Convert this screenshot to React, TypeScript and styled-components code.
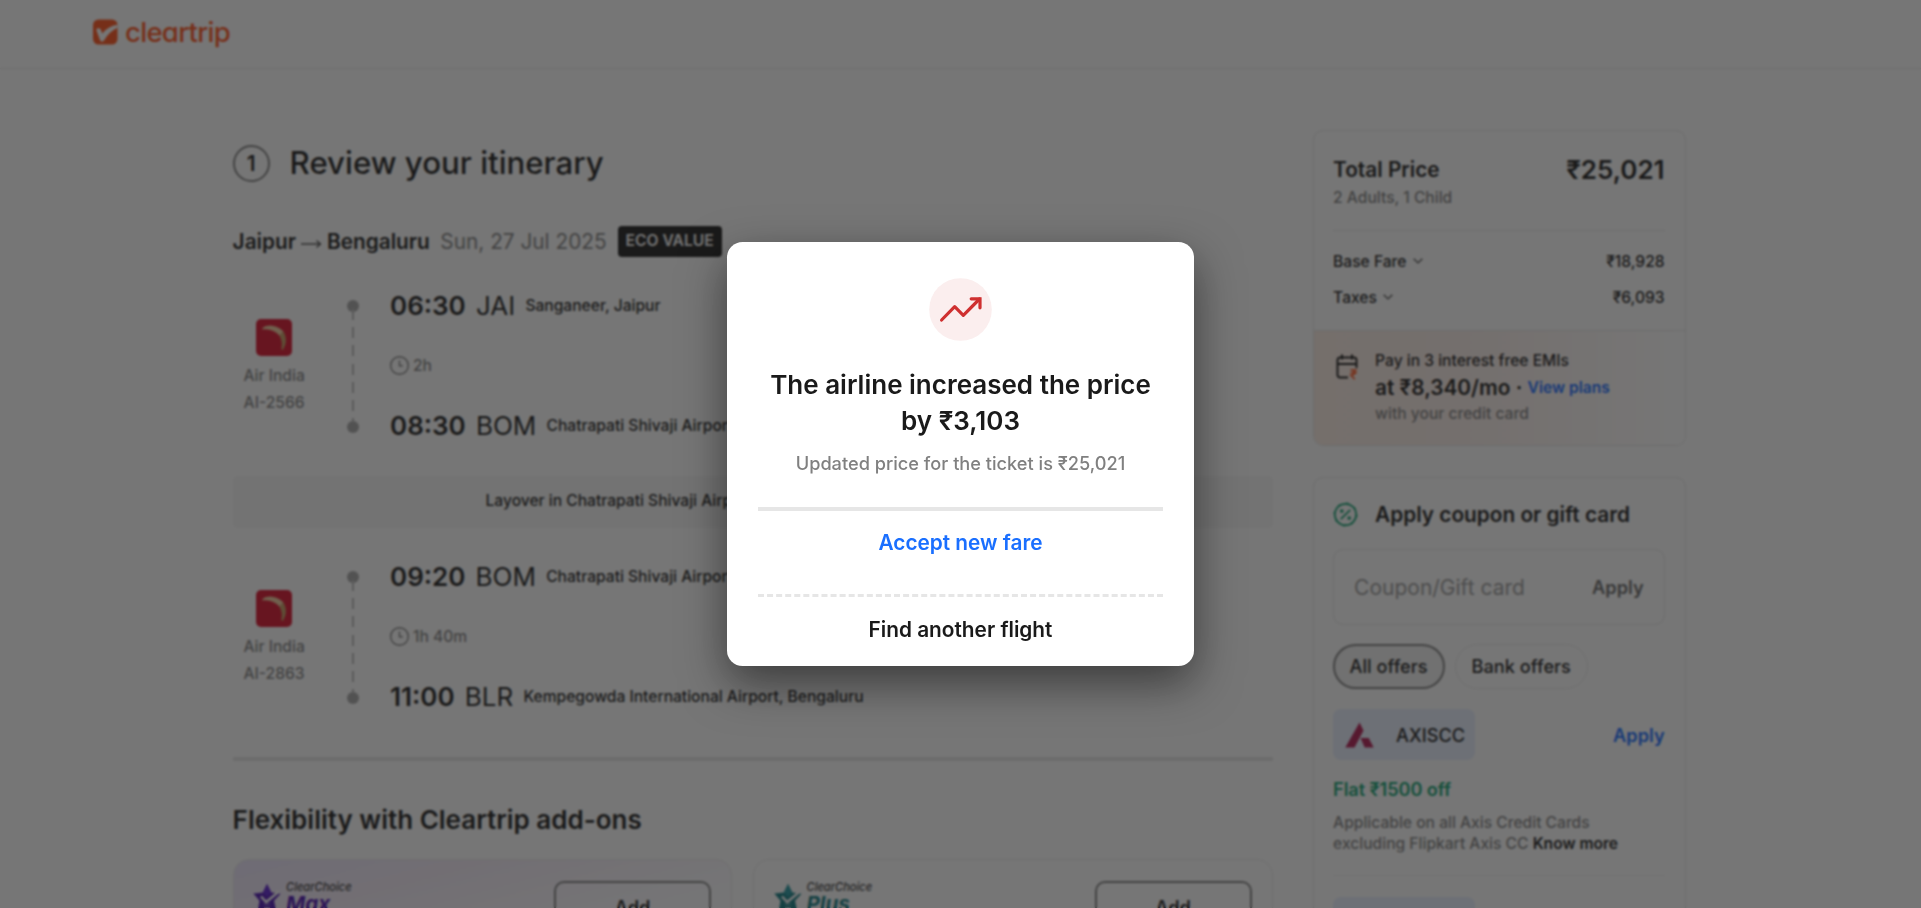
import React from "react";
import styled, { createGlobalStyle } from "styled-components";

const GlobalStyle = createGlobalStyle`
  * { box-sizing: border-box; }
  html, body { margin: 0; height: 100%; overflow: hidden; }
  body {
    background: #fff;
    color: #1a1a1a;
    font-family: Inter, "Liberation Sans", sans-serif;
    font-size: 15.6px;
    font-weight: 500;
  }
  h1, h2, h3, p { margin: 0; }
  button { font: inherit; color: inherit; background: none; border: 0; padding: 0; }
`;

const Page = styled.div`
  height: 908px;
  overflow: hidden;
`;

const Header = styled.header`
  height: 69px;
  padding: 19px 0 0 93px;
  border-bottom: 1px solid #ebebeb;
  display: flex;
  align-items: flex-start;
  gap: 7px;
  color: #ff4f17;
`;

const Wordmark = styled.span`
  font-size: 27.5px;
  line-height: 26px;
  font-weight: 550;
  letter-spacing: -0.7px;
  font-feature-settings: "cv11";
`;

const Columns = styled.main`
  display: flex;
  align-items: flex-start;
  gap: 40px;
  padding-left: 232.6px;
`;

const Itinerary = styled.section`
  width: 1040px;
  padding-top: 76px;
`;

const StepHeading = styled.h1`
  display: flex;
  align-items: center;
  gap: 20px;
  height: 37px;
  font-size: 31.2px;
  font-weight: 500;
  line-height: 37px;
`;

const StepTitle = styled.span`
  padding-bottom: 1px;
`;

const StepNumber = styled.span`
  width: 37px;
  height: 37px;
  border: 2px solid #808080;
  border-radius: 50%;
  font-size: 20.8px;
  font-weight: 600;
  line-height: 33px;
  text-align: center;
`;

const Route = styled.div`
  display: flex;
  align-items: center;
  height: 31px;
  margin-top: 44px;
  font-size: 20.8px;
  font-weight: 600;
`;

const RouteArrow = styled.svg`
  width: 21px;
  height: 10px;
  margin: 4px 5px 0 5px;
`;

const RouteDate = styled.span`
  margin: 0 11px 0 10.5px;
  font-weight: 400;
  color: #808080;
`;

const FareBadge = styled.span`
  width: 104px;
  height: 31px;
  border-radius: 4px;
  background: #1a1a1a;
  color: #fff;
  font-size: 15.6px;
  line-height: 29px;
  text-align: center;
`;

const FlightRow = styled.div`
  display: flex;
  height: 152px;
  margin-top: 33px;
`;

const Airline = styled.div`
  width: 83px;
  padding-top: 3px;
  display: flex;
  flex-direction: column;
  align-items: center;
  justify-content: center;
  line-height: 26.4px;
  color: #808080;
`;

const AirlineLogo = styled.svg`
  width: 36px;
  height: 37px;
  margin-bottom: 7px;
`;

const Timeline = styled.div`
  width: 12px;
  margin: 10px 31px 9px 31.4px;
  display: flex;
  flex-direction: column;
  align-items: center;
  justify-content: space-between;
`;

const Dot = styled.span`
  width: 12px;
  height: 12px;
  border-radius: 50%;
  background: #a6a6a6;
`;

const Track = styled.span`
  flex: 1;
  width: 2px;
  margin-top: -3px;
  background: repeating-linear-gradient(to bottom, #bbb 0 11px, transparent 11px 18.2px);
`;

const Legs = styled.div`
  display: flex;
  flex-direction: column;
  justify-content: space-between;
  padding-bottom: 1px;
`;

const Leg = styled.div`
  display: flex;
  align-items: center;
  gap: 10.2px;
  height: 31px;
  white-space: nowrap;
`;

const Time = styled.span`
  font-size: 26px;
  font-weight: 600;
`;

const Code = styled.span`
  font-size: 26px;
  font-weight: 400;
`;

const Duration = styled.div`
  display: flex;
  align-items: center;
  gap: 3px;
  color: #808080;
`;

const Layover = styled.div`
  height: 52px;
  margin-top: 34px;
  border-radius: 5px;
  background: #f7f7f7;
  line-height: 49px;
  text-align: center;
`;

const SectionRule = styled.hr`
  height: 4px;
  margin: 44px 0 0;
  border: 0;
  background: #e6e6e6;
`;

const SectionTitle = styled.h2`
  margin-top: 42px;
  font-size: 26px;
  line-height: 34px;
  font-weight: 600;
`;

const AddOns = styled.div`
  display: grid;
  grid-template-columns: 499.500px 519.500px;
  gap: 21px;
  margin-top: 22px;
`;

const AddOnCard = styled.article<{ $tinted?: boolean }>`
  display: flex;
  justify-content: space-between;
  align-items: flex-start;
  height: 240px;
  padding: 21px 20px 0;
  border: 1px solid #ebebeb;
  border-radius: 16px;
  background: ${(p) => (p.$tinted ? "linear-gradient(165deg, #ece6fd 0%, #f5ecf8 18%, #fdfcff 42%, #fff 60%)" : "#fff")};
`;

const AddOnBrand = styled.div`
  display: flex;
  gap: 5px;
  margin-left: -0.6px;

  svg { margin-top: 3px; }
`;

const AddOnName = styled.div<{ $color: string }>`
  font-size: 20.6px;
  line-height: 19px;
  font-weight: 700;
  font-style: italic;
  color: ${(p) => p.$color};

  small {
    display: block;
    color: #333;
    font-size: 11.1px;
    line-height: 13px;
    font-weight: 500;
  }
`;

const AddButton = styled.button`
  width: 157px;
  height: 52px;
  border: 2px solid #808080;
  border-radius: 10px;
  font-size: 18.2px;
  font-weight: 600;
`;

const Sidebar = styled.aside`
  width: 373px;
  padding-top: 61px;
`;

const Card = styled.section<{ $top?: number }>`
  margin-top: ${(p) => p.$top ?? 0}px;
  border: 1px solid #e6e6e6;
  border-radius: 10px;
  overflow: hidden;
`;

const CardBody = styled.div<{ $pad: string }>`
  padding: ${(p) => p.$pad};
`;

const Split = styled.div<{ $height: number }>`
  display: flex;
  align-items: center;
  justify-content: space-between;
  height: ${(p) => p.$height}px;
`;

const Strong = styled.span<{ $size?: number }>`
  font-size: ${(p) => p.$size ?? 20.8}px;
  font-weight: 600;
`;

const Travellers = styled.p`
  line-height: 28px;
  color: #808080;
`;

const Rule = styled.hr<{ $gap: string; $color?: string }>`
  height: 1px;
  margin: ${(p) => p.$gap};
  border: 0;
  background: ${(p) => p.$color ?? "#e6e6e6"};
`;

const FareLabel = styled.span`
  display: flex;
  align-items: center;
  gap: 6px;
`;

const EmiPanel = styled.div`
  display: flex;
  gap: 17px;
  height: 115px;
  padding: 17px 20px 0 22.5px;
  border-top: 1px solid #e6e6e6;
  background: linear-gradient(90deg, #fcede4 0%, #fbeee9 40%, #fff 98%);
  line-height: 25px;
`;

const EmiIcon = styled.svg`
  width: 22px;
  height: 26px;
  margin-top: 6px;
`;

const EmiPrice = styled.div`
  display: flex;
  align-items: center;
  gap: 5.3px;
  height: 29px;
`;

const Link = styled.button<{ $size: number }>`
  font-size: ${(p) => p.$size}px;
  font-weight: 600;
  color: #1268ff;
`;

const Muted = styled.p<{ $line?: number }>`
  line-height: ${(p) => p.$line ?? 24}px;
  color: #808080;

  b { font-weight: 600; color: #1a1a1a; }
`;

const CouponTitle = styled.h3`
  display: flex;
  align-items: center;
  gap: 17.5px;
  height: 28px;
  font-size: 20.8px;
  font-weight: 600;
`;

const CouponField = styled.div`
  display: flex;
  align-items: center;
  justify-content: space-between;
  height: 76px;
  margin-top: 21px;
  padding: 0 20px 0 20.5px;
  border: 1px solid #e6e6e6;
  border-radius: 10px;
  font-size: 21px;
  font-weight: 400;
  color: #999;
`;

const ApplyCoupon = styled.button`
  font-size: 18.2px;
  font-weight: 600;
  color: #666;
`;

const Chips = styled.div`
  display: flex;
  gap: 10px;
  margin-top: 19px;
`;

const Chip = styled.button<{ $active?: boolean }>`
  height: 45px;
  padding: 0 ${(p) => (p.$active ? 15 : 16)}px 2px;
  border: ${(p) => (p.$active ? "2px solid #808080" : "1px solid #ebebeb")};
  border-radius: 23px;
  background: ${(p) => (p.$active ? "#f2f2f2" : "#fff")};
  font-size: 18.2px;
`;

const OfferTag = styled.span`
  display: flex;
  align-items: center;
  gap: 22px;
  width: 141.5px;
  height: 51px;
  padding-left: 12px;
  border-radius: 8px;
  background: #e8f0ff;
  font-size: 18.2px;
`;

const OfferValue = styled.p`
  margin: 16px 0 10px;
  font-size: 18.2px;
  line-height: 26px;
  font-weight: 600;
  letter-spacing: -0.1px;
  color: #0e9f6e;
`;

const Overlay = styled.div`
  position: fixed;
  inset: 0;
  display: flex;
  align-items: flex-start;
  justify-content: center;
  padding-top: 242px;
  background: rgba(26, 26, 26, 0.6);
  backdrop-filter: blur(1.3px);
`;

const Dialog = styled.div`
  display: flex;
  flex-direction: column;
  align-items: center;
  width: 467px;
  height: 424px;
  padding: 36px 31px 0;
  border-radius: 15.6px;
  background: #fff;
  box-shadow: 0 17px 46px rgba(0, 0, 0, 0.5);
  text-align: center;
`;

const DialogIcon = styled.svg`
  width: 63px;
  height: 63px;
`;

const DialogTitle = styled.h2`
  margin-top: 26px;
  font-size: 26px;
  line-height: 36px;
  font-weight: 600;
`;

const DialogText = styled.p`
  margin: 11px 0 31px;
  font-size: 18.2px;
  line-height: 26px;
  color: #808080;
`;

const DialogAction = styled.button<{ $primary?: boolean }>`
  width: 405px;
  height: ${(p) => (p.$primary ? 87 : 72)}px;
  padding: ${(p) => (p.$primary ? "19px 0 38px" : "20px 0 23px")};
  border-top: ${(p) => (p.$primary ? "4px solid" : "3px dashed")} #e6e6e6;
  font-size: 20.8px;
  line-height: 26px;
  font-weight: 600;
  color: ${(p) => (p.$primary ? "#1a6fff" : "#1a1a1a")};
`;

function LogoMark() {
  return (
    <svg width="25" height="26" viewBox="0 0 25 26">
      <rect y=".5" width="24.5" height="25" rx="5.5" fill="#ff4f17" />
      <path d="M3.300 11c.3-2.200 3.600-2.400 4.500-.2l1.500 3.700C13 9.800 18 6.800 24.500 5.800v3C19 11.500 14.500 15.500 11 21.500c-1 1.600-3.200 1.500-3.900-.2z" fill="#fff" />
    </svg>
  );
}

function Clock() {
  return (
    <svg width="20" height="20" viewBox="0 0 20 20" fill="none" stroke="#808080" strokeWidth="1.4">
      <circle cx="9.500" cy="9.500" r="8.800" />
      <path d="M9.500 4.500v5.200h3.200" />
    </svg>
  );
}

function Chevron() {
  return (
    <svg width="10" height="6" viewBox="0 0 10 6" fill="none" stroke="#4d4d4d" strokeWidth="1.400">
      <path d="M.7.8 5 4.900 9.300.8" />
    </svg>
  );
}

function AirIndiaLogo() {
  return (
    <AirlineLogo viewBox="0 0 36 37">
      <rect width="36" height="37" rx="5" fill="#da0e29" />
      <path d="M6.500 9C13 4.500 21 6.500 27.300 12.300L24 17C19 11.500 13 9.500 6.500 10.500z" fill="#efc89a" />
      <path d="M27.300 12.300c3.500 6 3.700 12.500-.5 18.700-1.200-.2-1.500-1-1.300-2 .8-4.500.3-8.500-2-12z" fill="#c39a5e" />
    </AirlineLogo>
  );
}

function StarMark({ light, dark }: { light: string; dark: string }) {
  return (
    <svg width="28" height="29" viewBox="0 0 28 29">
      <path d="M14 0l4.300 8.500L27.500 9.800 21 16.800 23.500 28 14 23.500 4.500 28 6.500 16.800.3 9.500 9.800 8.500z" fill={dark} />
      <path d="M14 0l4.300 8.500-4.300 4.600-4.200-4.600z" fill={light} />
      <path d="M8 12.500l5.200 5.500L26 7.500" fill="none" stroke="#fff" strokeWidth="2.400" />
      <path d="M11 20h6M11 23.500h6" stroke="#fff" strokeWidth="1" opacity=".5" />
    </svg>
  );
}

function AxisMark() {
  return (
    <svg width="29" height="26" viewBox="0 0 29 26" fill="#b0184f">
      <path d="M14.500.5 18.500 8.500 9.500 25.500H.3z" />
      <path d="M15.500 16h8.200l5 9.500h-9z" />
    </svg>
  );
}

interface Stop { time: string; code: string; place: string }
interface FlightProps { number: string; duration: string; from: Stop; to: Stop }

function StopLine({ stop }: { stop: Stop }) {
  return (
    <Leg>
      <Time>{stop.time}</Time>
      <Code>{stop.code}</Code>
      <span>{stop.place}</span>
    </Leg>
  );
}

function Flight({ number, duration, from, to }: FlightProps) {
  return (
    <FlightRow>
      <Airline>
        <AirIndiaLogo />
        <span>Air India</span>
        <span>{number}</span>
      </Airline>
      <Timeline><Dot /><Track /><Dot /></Timeline>
      <Legs>
        <StopLine stop={from} />
        <Duration><Clock />{duration}</Duration>
        <StopLine stop={to} />
      </Legs>
    </FlightRow>
  );
}

function Fare({ label, amount }: { label: string; amount: string }) {
  return (
    <Split $height={36}>
      <FareLabel>{label}<Chevron /></FareLabel>
      <span>{amount}</span>
    </Split>
  );
}

function AddOn({ name, color, light, tinted }: { name: string; color: string; light: string; tinted?: boolean }) {
  return (
    <AddOnCard $tinted={tinted}>
      <AddOnBrand>
        <StarMark light={light} dark={color} />
        <AddOnName $color={color}><small>ClearChoice</small>{name}</AddOnName>
      </AddOnBrand>
      <AddButton>Add</AddButton>
    </AddOnCard>
  );
}

export default function App() {
  return (
    <>
      <GlobalStyle />
      <Page>
        <Header><LogoMark /><Wordmark>cleartrip</Wordmark></Header>
        <Columns>
          <Itinerary>
            <StepHeading><StepNumber>1</StepNumber><StepTitle>Review your itinerary</StepTitle></StepHeading>
            <Route>
              Jaipur
              <RouteArrow viewBox="0 0 21 10" fill="none" stroke="#4d4d4d" strokeWidth="1.400">
                <path d="M0 5h19M15.500 1.500 19.500 5l-4 3.500" />
              </RouteArrow>
              Bengaluru
              <RouteDate>Sun, 27 Jul 2025</RouteDate>
              <FareBadge>ECO VALUE</FareBadge>
            </Route>
            <Flight
              number="AI-2566"
              duration="2h"
              from={{ time: "06:30", code: "JAI", place: "Sanganeer, Jaipur" }}
              to={{ time: "08:30", code: "BOM", place: "Chatrapati Shivaji Airport, Mumbai" }}
            />
            <Layover>Layover in Chatrapati Shivaji Airport, Mumbai • 50m • Change of planes</Layover>
            <Flight
              number="AI-2863"
              duration="1h 40m"
              from={{ time: "09:20", code: "BOM", place: "Chatrapati Shivaji Airport, Mumbai" }}
              to={{ time: "11:00", code: "BLR", place: "Kempegowda International Airport, Bengaluru" }}
            />
            <SectionRule />
            <SectionTitle>Flexibility with Cleartrip add-ons</SectionTitle>
            <AddOns>
              <AddOn name="Max" color="#4a0fb0" light="#5b1fd0" tinted />
              <AddOn name="Plus" color="#0f7a80" light="#2396a0" />
            </AddOns>
          </Itinerary>

          <Sidebar>
            <Card>
              <CardBody $pad="24px 20px 15px 19.500px">
                <Split $height={29}><Strong>Total Price</Strong><Strong $size={26}>₹25,021</Strong></Split>
                <Travellers>2 Adults, 1 Child</Travellers>
                <Rule $gap="18px 0 12px" />
                <Fare label="Base Fare" amount="₹18,928" />
                <Fare label="Taxes" amount="₹6,093" />
              </CardBody>
              <EmiPanel>
                <EmiIcon viewBox="0 0 22 26" fill="none" stroke="#1a1a1a" strokeWidth="2">
                  <path d="M12 23.500H4a2.500 2.500 0 0 1-2.500-2.500V6A2.500 2.500 0 0 1 4 3.500h14A2.500 2.500 0 0 1 20.500 6v8M1.500 10h19M6 .5v5M16 .5v5" />
                  <path d="M14.500 16h6.500M14.500 18.700h6.500M15 16c5 0 5 5.200 0 5.200l3.800 4" stroke="#ff4f17" strokeWidth="1.600" />
                </EmiIcon>
                <div>
                  <div>Pay in 3 interest free EMIs</div>
                  <EmiPrice><Strong>at ₹8,340/mo</Strong><Strong>·</Strong><Link $size={15.6}>View plans</Link></EmiPrice>
                  <Muted>with your credit card</Muted>
                </div>
              </EmiPanel>
            </Card>

            <Card $top={31}>
              <CardBody $pad="22px 20px 0 19px">
                <CouponTitle>
                  <svg width="25" height="25" viewBox="0 0 25 25" fill="none" stroke="#0e9f6e" strokeWidth="1.700">
                    <circle cx="12.500" cy="12.500" r="10.700" />
                    <circle cx="12.500" cy="12.500" r="11.500" strokeDasharray="3 6.030" strokeWidth="1" />
                    <path d="M7.800 17.200 17.200 7.800" />
                    <circle cx="8.800" cy="9" r="1" />
                    <circle cx="16.200" cy="16" r="1" />
                  </svg>
                  Apply coupon or gift card
                </CouponTitle>
                <CouponField>Coupon/Gift card<ApplyCoupon>Apply</ApplyCoupon></CouponField>
                <Chips><Chip $active>All offers</Chip><Chip>Bank offers</Chip></Chips>
                <CardBody $pad="20px 0 0 0.5px">
                  <Split $height={51}>
                    <OfferTag><AxisMark />AXISCC</OfferTag>
                    <Link $size={18.2}>Apply</Link>
                  </Split>
                  <OfferValue>Flat ₹1500 off</OfferValue>
                  <Muted $line={21}>Applicable on all Axis Credit Cards<br />excluding Flipkart Axis CC <b>Know more</b></Muted>
                  <Rule $gap="21px 0 21px" $color="#f2f2f2" />
                  <Split $height={51}><OfferTag /></Split>
                </CardBody>
              </CardBody>
            </Card>
          </Sidebar>
        </Columns>
      </Page>

      <Overlay>
        <Dialog role="dialog">
          <DialogIcon viewBox="0 0 63 63" fill="none" stroke="#cf3030" strokeWidth="3.200" strokeLinecap="round" strokeLinejoin="round">
            <circle cx="31.500" cy="31.500" r="31.300" fill="#fbeeee" stroke="none" />
            <path d="M12.600 42 25.700 28.700l8.600 8.600L50.500 21" />
            <path d="M42.200 20.800h8.800v9" strokeLinejoin="miter" />
          </DialogIcon>
          <DialogTitle>The airline increased the price<br />by ₹3,103</DialogTitle>
          <DialogText>Updated price for the ticket is ₹25,021</DialogText>
          <DialogAction $primary>Accept new fare</DialogAction>
          <DialogAction>Find another flight</DialogAction>
        </Dialog>
      </Overlay>
    </>
  );
}
